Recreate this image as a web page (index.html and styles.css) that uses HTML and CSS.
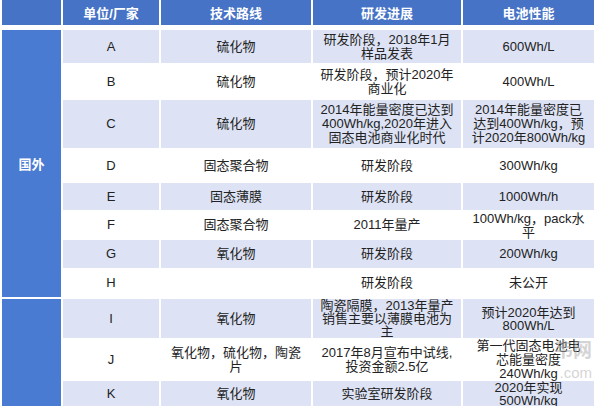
FILE: index.html
```html
<!DOCTYPE html>
<html lang="zh-CN">
<head>
<meta charset="utf-8">
<title>固态电池研发进展</title>
<link rel="stylesheet" href="styles.css">
</head>
<body>
<div class="table">
  <div class="head">
    <div class="hc"></div>
    <div class="hc">单位/厂家</div>
    <div class="hc">技术路线</div>
    <div class="hc">研发进展</div>
    <div class="hc">电池性能</div>
  </div>

  <div class="group">
    <div class="side">国外</div>
    <div class="rows">
      <div class="row alt r-a">
        <div class="c">A</div><div class="c">硫化物</div>
        <div class="c c4">研发阶段，2018年1月样品发表</div><div class="c c5">600Wh/L</div>
      </div>
      <div class="row r-b">
        <div class="c">B</div><div class="c">硫化物</div>
        <div class="c c4">研发阶段，预计2020年商业化</div><div class="c c5">400Wh/L</div>
      </div>
      <div class="row alt r-c">
        <div class="c">C</div><div class="c">硫化物</div>
        <div class="c c4">2014年能量密度已达到400Wh/kg,2020年进入固态电池商业化时代</div>
        <div class="c c5">2014年能量密度已达到400Wh/kg，预计2020年800Wh/kg</div>
      </div>
      <div class="row r-d">
        <div class="c">D</div><div class="c">固态聚合物</div>
        <div class="c c4">研发阶段</div><div class="c c5">300Wh/kg</div>
      </div>
      <div class="row alt r-e">
        <div class="c">E</div><div class="c">固态薄膜</div>
        <div class="c c4">研发阶段</div><div class="c c5">1000Wh/h</div>
      </div>
      <div class="row r-f">
        <div class="c">F</div><div class="c">固态聚合物</div>
        <div class="c c4">2011年量产</div><div class="c c5 top">100Wh/kg，pack水平</div>
      </div>
      <div class="row alt r-g">
        <div class="c">G</div><div class="c">氧化物</div>
        <div class="c c4">研发阶段</div><div class="c c5">200Wh/kg</div>
      </div>
      <div class="row r-h">
        <div class="c">H</div><div class="c"></div>
        <div class="c c4">研发阶段</div><div class="c c5">未公开</div>
      </div>
    </div>
  </div>

  <div class="group">
    <div class="side"></div>
    <div class="rows">
      <div class="row alt r-i">
        <div class="c">I</div><div class="c">氧化物</div>
        <div class="c c4">陶瓷隔膜，2013年量产销售主要以薄膜电池为主</div>
        <div class="c c5">预计2020年达到800Wh/L</div>
      </div>
      <div class="row r-j">
        <div class="c">J</div><div class="c">氧化物，硫化物，陶瓷片</div>
        <div class="c c4">2017年8月宣布中试线,投资金额2.5亿</div>
        <div class="c c5">第一代固态电池电芯能量密度240Wh/kg</div>
      </div>
      <div class="row alt r-k">
        <div class="c">K</div><div class="c">氧化物</div>
        <div class="c c4">实验室研发阶段</div>
        <div class="c c5">2020年实现500Wh/kg</div>
      </div>
    </div>
  </div>

  <div class="watermark">
    <span class="wm-name">韦网</span>
    <span class="wm-url">.com</span>
  </div>
</div>
</body>
</html>
```

FILE: styles.css
```css
html, body {
  margin: 0;
  padding: 0;
  background: #ffffff;
}

body {
  font-family: "Liberation Sans", "Noto Sans CJK SC", sans-serif;
  font-size: 13px;
  color: #222222;
  overflow: hidden;
}

.table {
  position: relative;
  padding-left: 2px;
  width: 592px;
}

.head {
  display: grid;
  grid-template-columns: 59px 96px 150px 148px 131px;
  column-gap: 2px;
  height: 25px;
  margin-bottom: 5px;
}

.hc {
  background: #4673c6;
  color: #ffffff;
  font-weight: bold;
  display: flex;
  align-items: center;
  justify-content: center;
  padding-bottom: 1px;
}

.group {
  display: flex;
  gap: 2px;
  margin-bottom: 2px;
}

.side {
  width: 59px;
  flex: none;
  background: #4a7bd2;
  color: #ffffff;
  font-weight: bold;
  display: flex;
  align-items: center;
  justify-content: center;
}

.rows {
  display: flex;
  flex-direction: column;
}

.row {
  display: grid;
  grid-template-columns: 96px 150px 148px 131px;
  column-gap: 2px;
}

.row.alt .c {
  background: #dde3f5;
}

.c {
  display: flex;
  align-items: center;
  justify-content: center;
  text-align: center;
  padding: 0 5px;
  line-height: 14px;
  overflow: visible;
}

.c4 {
  padding: 0 5px;
}

.c5 {
  padding: 0 8px;
}

.c.top {
  align-items: flex-start;
  padding-top: 2px;
}

.r-a { height: 33px; }
.r-b { height: 37px; }
.r-c { height: 48px; }
.r-d { height: 35px; }
.r-e { height: 27px; }
.r-f { height: 30px; }
.r-g { height: 28px; }
.r-h { height: 29px; }
.r-i { height: 39px; }
.r-j { height: 43px; }
.r-k { height: 25px; }

.r-i .c, .r-k .c5 {
  line-height: 13px;
}

.watermark {
  position: absolute;
  left: 528px;
  top: 338px;
  display: flex;
  flex-direction: column;
  align-items: flex-end;
  width: 64px;
  color: rgba(170, 170, 170, 0.5);
  pointer-events: none;
}

.wm-name {
  font-family: "Noto Sans CJK SC", sans-serif;
  font-size: 19px;
  font-weight: bold;
  line-height: 22px;
}

.wm-url {
  font-size: 15px;
  line-height: 18px;
  margin-top: 4px;
}
```
